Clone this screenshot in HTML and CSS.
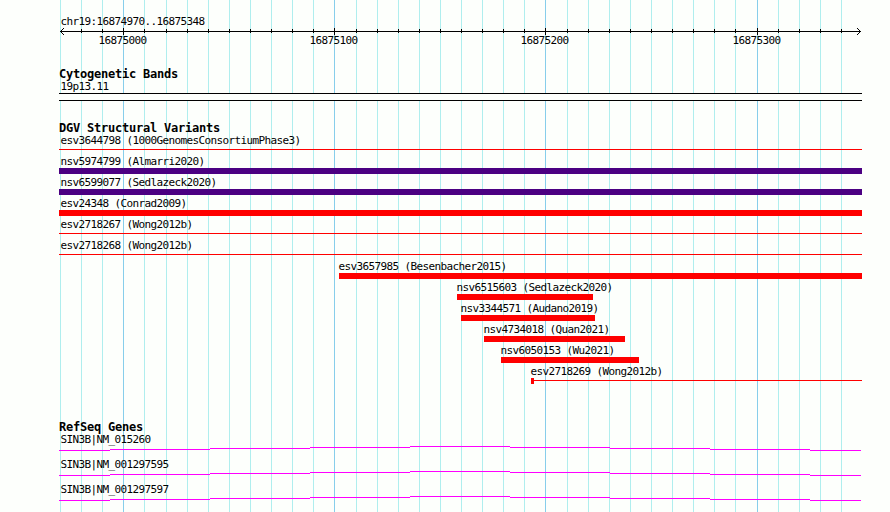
FILE: index.html
```html
<!DOCTYPE html>
<html lang="en">
<head>
    <meta charset="UTF-8">
    <title>chr19:16874970..16875348</title>
    <link rel="stylesheet" href="styles.css">
</head>
<body>

<!-- position grid, behind all the tracks -->
<svg class="grid" width="890" height="512" shape-rendering="crispEdges">
    <path class="minor" d="M60.5 0v512M81.5 0v512M102.5 0v512M144.5 0v512M166.5 0v512M187.5 0v512M208.5 0v512M229.5 0v512M250.5 0v512M271.5 0v512M292.5 0v512M313.5 0v512M356.5 0v512M377.5 0v512M398.5 0v512M419.5 0v512M440.5 0v512M461.5 0v512M482.5 0v512M503.5 0v512M524.5 0v512M567.5 0v512M588.5 0v512M609.5 0v512M630.5 0v512M651.5 0v512M672.5 0v512M693.5 0v512M714.5 0v512M735.5 0v512M778.5 0v512M799.5 0v512M820.5 0v512M841.5 0v512"/>
    <path class="major" d="M123.5 0v512M334.5 0v512M545.5 0v512M757.5 0v512"/>
</svg>

<div class="tracks">

    <div class="region">chr19:16874970..16875348</div>
    <svg class="ruler" viewBox="59 27 803 20" width="803" height="20">
        <path shape-rendering="crispEdges" d="M60 31.5H861M81.5 29v4M102.5 29v4M144.5 29v4M166.5 29v4M187.5 29v4M208.5 29v4M229.5 29v4M250.5 29v4M271.5 29v4M292.5 29v4M313.5 29v4M356.5 29v4M377.5 29v4M398.5 29v4M419.5 29v4M440.5 29v4M461.5 29v4M482.5 29v4M503.5 29v4M524.5 29v4M567.5 29v4M588.5 29v4M609.5 29v4M630.5 29v4M651.5 29v4M672.5 29v4M693.5 29v4M714.5 29v4M735.5 29v4M778.5 29v4M799.5 29v4M820.5 29v4M841.5 29v4M123.5 28v7M334.5 28v7M545.5 28v7M757.5 28v7"/>
        <path d="M64 28L60.5 31.5L64 35M857 28L860.5 31.5L857 35"/>
        <text x="98.5" y="44">16875000</text>
        <text x="309.5" y="44">16875100</text>
        <text x="520.5" y="44">16875200</text>
        <text x="732.5" y="44">16875300</text>
    </svg>

    <h2 class="cyto-title">Cytogenetic Bands</h2>
    <div class="label">19p13.11</div>
    <div class="band"></div>

    <h2 class="dgv-title">DGV Structural Variants</h2>
    <div class="variant">
        <div class="label">esv3644798 (1000GenomesConsortiumPhase3)</div>
        <div class="line"></div>
    </div>
    <div class="variant">
        <div class="label">nsv5974799 (Almarri2020)</div>
        <div class="bar purple"></div>
    </div>
    <div class="variant">
        <div class="label">nsv6599077 (Sedlazeck2020)</div>
        <div class="bar purple"></div>
    </div>
    <div class="variant">
        <div class="label">esv24348 (Conrad2009)</div>
        <div class="bar"></div>
    </div>
    <div class="variant">
        <div class="label">esv2718267 (Wong2012b)</div>
        <div class="line"></div>
    </div>
    <div class="variant">
        <div class="label">esv2718268 (Wong2012b)</div>
        <div class="line"></div>
    </div>
    <div class="variant inner besenbacher">
        <div class="label">esv3657985 (Besenbacher2015)</div>
        <div class="bar"></div>
    </div>
    <div class="variant inner sedlazeck">
        <div class="label">nsv6515603 (Sedlazeck2020)</div>
        <div class="bar"></div>
    </div>
    <div class="variant inner audano">
        <div class="label">nsv3344571 (Audano2019)</div>
        <div class="bar"></div>
    </div>
    <div class="variant inner quan">
        <div class="label">nsv4734018 (Quan2021)</div>
        <div class="bar"></div>
    </div>
    <div class="variant inner wu">
        <div class="label">nsv6050153 (Wu2021)</div>
        <div class="bar"></div>
    </div>
    <div class="variant inner wong">
        <div class="label">esv2718269 (Wong2012b)</div>
        <div class="start">
            <div class="bar"></div>
            <div class="line"></div>
        </div>
    </div>

    <h2 class="refseq-title">RefSeq Genes</h2>
    <div class="gene">
        <div class="label">SIN3B|NM_015260</div>
        <svg class="intron" viewBox="59 445 803 6" width="803" height="6" shape-rendering="crispEdges">
            <path d="M59 450.5H110M110 449.5H210M210 448.5H310M310 447.5H410M410 446.5H510M510 447.5H610M610 448.5H710M710 449.5H810M810 450.5H861"/>
        </svg>
    </div>
    <div class="gene">
        <div class="label">SIN3B|NM_001297595</div>
        <svg class="intron" viewBox="59 445 803 6" width="803" height="6" shape-rendering="crispEdges">
            <path d="M59 450.5H110M110 449.5H210M210 448.5H310M310 447.5H410M410 446.5H510M510 447.5H610M610 448.5H710M710 449.5H810M810 450.5H861"/>
        </svg>
    </div>
    <div class="gene">
        <div class="label">SIN3B|NM_001297597</div>
        <svg class="intron" viewBox="59 445 803 6" width="803" height="6" shape-rendering="crispEdges">
            <path d="M59 450.5H110M110 449.5H210M210 448.5H310M310 447.5H410M410 446.5H510M510 447.5H610M610 448.5H710M710 449.5H810M810 450.5H861"/>
        </svg>
    </div>

</div>

</body>
</html>
```
FILE: styles.css
```css
body{
    margin: 0;
    height: 512px;
    overflow: hidden;
    background: #fdfffc;
    color: #000;
    font-family: "DejaVu Sans Mono", monospace;
    font-size: 11px;
    line-height: 14px;
    letter-spacing: -0.62px;
}
svg{
    display: block;
    fill: none;
}
.grid{
    position: absolute;
    top: 0;
    left: 0;
}
.minor{
    stroke: #afeeee;
}
.major{
    stroke: #87ceeb;
}

.tracks{
    position: relative;
    width: 803px;
    padding: 15px 0 0 59px;
}
.region, .label{
    height: 12px;
    padding-left: 1.5px;
    white-space: nowrap;
}
.ruler path{
    stroke: #000;
}
.ruler text{
    fill: #000;
}
h2{
    height: 12px;
    margin: 21px 0 0;
    font-size: 12px;
    line-height: 13px;
    font-weight: bold;
    letter-spacing: -0.22px;
}
.band{
    box-sizing: border-box;
    height: 8px;
    margin-top: 1px;
    border-top: 1px solid #000;
    border-bottom: 1px solid #000;
    background: #fdfffc;
}

.variant{
    height: 21px;
}
.bar{
    height: 6px;
    margin-top: 1px;
    background: #f00;
}
.purple{
    background: #4b0082;
}
.line{
    height: 1px;
    margin-top: 3px;
    background: #f00;
}
.inner .label{
    padding: 0;
    margin-left: -0.5px;
}
.besenbacher{
    margin-left: 280px;
}
.sedlazeck{
    width: 136px;
    margin-left: 398px;
}
.audano{
    width: 134px;
    margin-left: 402px;
}
.quan{
    width: 141px;
    margin-left: 425px;
}
.wu{
    width: 138px;
    margin-left: 442px;
}
.wong{
    margin-left: 472px;
}
.start{
    display: flex;
}
.start .bar{
    width: 3px;
}
.start .line{
    flex: 1;
}

.refseq-title{
    margin-top: 35px;
}
.gene{
    height: 25px;
}
.intron path{
    stroke: #f0f;
}
```
